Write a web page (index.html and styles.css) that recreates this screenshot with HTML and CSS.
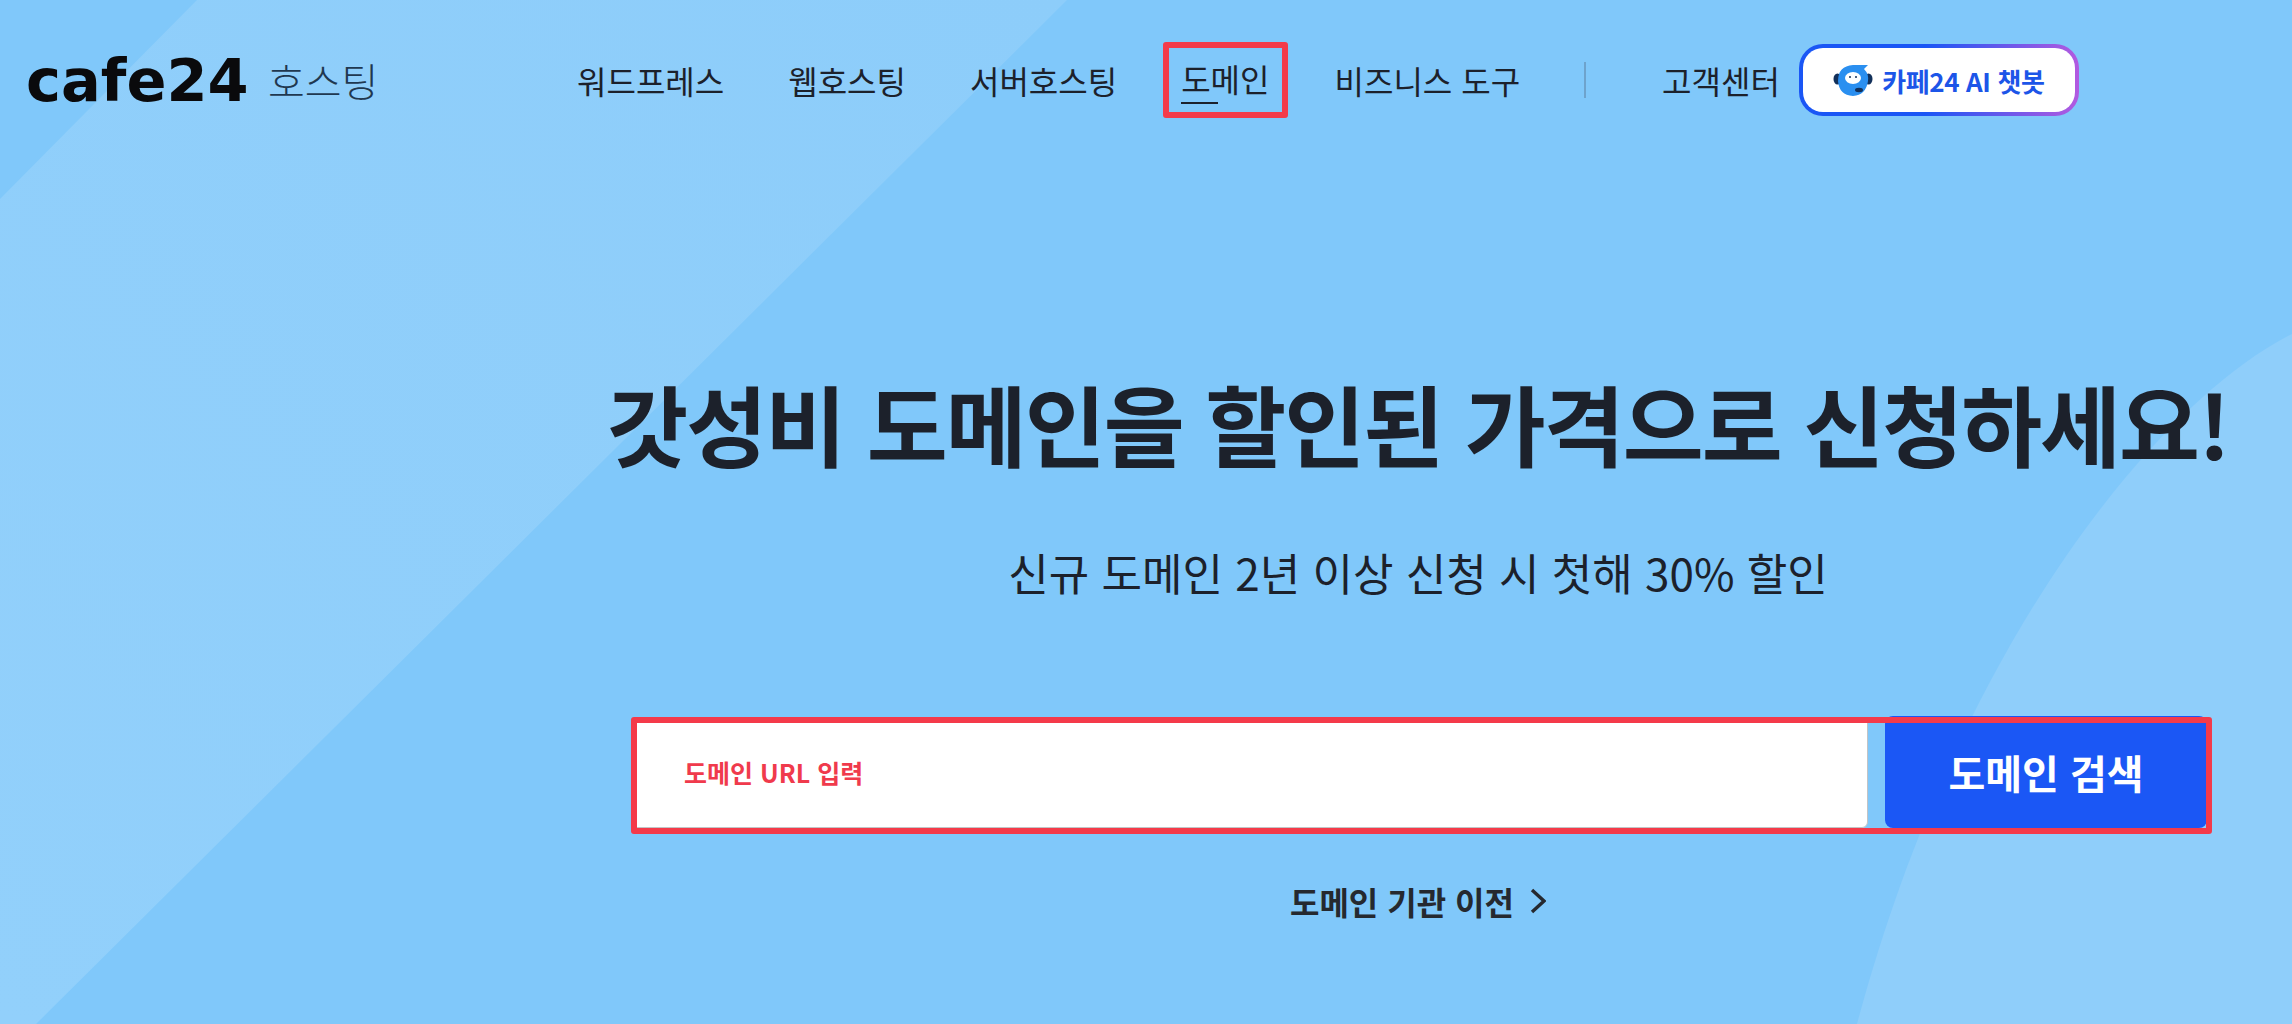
FILE: index.html
```html
<!DOCTYPE html>
<html lang="ko">
<head>
    <meta charset="UTF-8">
    <meta name="viewport" content="width=device-width, initial-scale=1.0">
    <title>카페24 호스팅 - 도메인</title>
    <link rel="stylesheet" href="styles.css">
</head>
<body>
    <!-- 배경 도형 -->
    <svg class="bg-shapes" viewBox="0 0 2292 1024" aria-hidden="true">
        <defs>
            <linearGradient id="bandFill" x1="1" y1="0" x2="0" y2="1">
                <stop offset="0" stop-color="#8dcdfa"/>
                <stop offset="1" stop-color="#92d0fb"/>
            </linearGradient>
        </defs>
        <polygon points="197,0 1067,0 36,1024 0,1024 0,199" fill="url(#bandFill)"/>
        <path d="M2292,334 C2160,400 1960,640 1857,1024 L2292,1024 Z" fill="#8fcefa"/>
    </svg>

    <header class="top-bar">
        <a class="logo" href="#">
            <span class="logo-mark">cafe24</span>
            <span class="logo-sub">호스팅</span>
        </a>
        <nav class="main-nav">
            <a href="#">워드프레스</a>
            <a href="#">웹호스팅</a>
            <a href="#">서버호스팅</a>
            <a href="#" class="is-active"><span>도메인</span></a>
            <a href="#">비즈니스 도구</a>
            <i class="nav-divider"></i>
            <a href="#" class="nav-help">고객센터</a>
            <a href="#" class="chatbot">
                <svg class="chatbot-icon" viewBox="0 0 40 32" aria-hidden="true">
                    <ellipse cx="4.5" cy="15" rx="4" ry="5.5" fill="#12305a"/>
                    <ellipse cx="35.5" cy="15" rx="4" ry="5.5" fill="#12305a"/>
                    <path d="M20 1 L35 1 L31 5 Q36 10 35 17 Q33 31 20 32 Q6 31 5 17 Q5 2 20 1 Z" fill="#2a8ff0"/>
                    <ellipse cx="20" cy="14" rx="8" ry="6" fill="#fff"/>
                    <circle cx="17" cy="13" r="1" fill="#12305a"/>
                    <circle cx="23" cy="13" r="1" fill="#12305a"/>
                    <ellipse cx="26" cy="26" rx="4" ry="2.2" fill="#12305a"/>
                </svg>
                카페24 AI 챗봇
            </a>
        </nav>
    </header>

    <main class="hero">
        <h1>갓성비 도메인을 할인된 가격으로 신청하세요!</h1>
        <p class="hero-sub">신규 도메인 2년 이상 신청 시 첫해 30% 할인</p>
        <form class="search-form">
            <div class="search-input">도메인 URL 입력</div>
            <button type="button" class="search-btn">도메인 검색</button>
        </form>
        <a href="#" class="transfer-link">
            도메인 기관 이전
            <svg viewBox="0 0 16 26" aria-hidden="true"><path d="M2 2 L14 13 L2 24" fill="none" stroke="#25292f" stroke-width="3.4"/></svg>
        </a>
    </main>
</body>
</html>
```

FILE: styles.css
```css
html, body {
    height: 100%;
}
body {
    margin: 0;
    height: 1024px;
    overflow: hidden;
    background-color: #80c8fa;
    color: #1c212b;
    font-family: "Noto Sans CJK KR", "Noto Sans", sans-serif;
}
a {
    color: inherit;
    text-decoration: none;
}
.bg-shapes {
    position: absolute;
    top: 0;
    left: 0;
    width: 2292px;
    height: 1024px;
}

/* 상단 메뉴 */
.top-bar {
    position: relative;
    display: flex;
    align-items: center;
    height: 78px;
    padding: 41px 0 0 26px;
}
.logo {
    display: flex;
    align-items: center;
    gap: 16px;
    width: 551px;
}
.logo-mark {
    width: 226px;
    font-family: "DejaVu Sans", sans-serif;
    font-size: 59px;
    font-weight: 700;
    line-height: 1;
    color: #0a0a0c;
}
.logo-sub {
    font-size: 40px;
    font-weight: 300;
    color: #1f3850;
}
.main-nav {
    display: flex;
    align-items: center;
    font-size: 32px;
    font-weight: 400;
}
.main-nav a {
    margin-right: 64px;
}
.main-nav .is-active {
    box-sizing: border-box;
    height: 76px;
    margin: 0 47px 0 -18px;
    padding: 0 12px;
    border: 6px solid #f43a4a;
    border-radius: 3px;
    line-height: 60px;
}
.is-active span {
    display: inline-block;
    height: 60px;
    background: linear-gradient(#1c212b, #1c212b) left 54px / 37px 2px no-repeat;
}
.nav-divider {
    width: 2px;
    height: 36px;
    margin-right: 76px;
    background-color: #6ea3cc;
}
.main-nav .nav-help {
    margin-right: 19px;
}
.main-nav .chatbot {
    display: flex;
    align-items: center;
    justify-content: center;
    gap: 9px;
    box-sizing: border-box;
    width: 280px;
    height: 72px;
    margin: 0;
    border: 4px solid transparent;
    border-radius: 24px;
    background:
        linear-gradient(#fff, #fff) padding-box,
        linear-gradient(90deg, #1a56f5 45%, #b25ae0) border-box;
    color: #1c55e8;
    font-size: 26px;
    font-weight: 700;
    letter-spacing: -0.4px;
}
.chatbot-icon {
    width: 40px;
    height: 32px;
}

/* 본문 */
.hero {
    position: relative;
    display: flex;
    flex-direction: column;
    align-items: center;
    width: 1616px;
    margin-left: 610px;
}
.hero h1 {
    margin: 259px 0 0;
    font-size: 88px;
    font-weight: 700;
    line-height: 1;
    letter-spacing: -2px;
    white-space: nowrap;
}
.hero-sub {
    margin: 80px 0 0;
    font-size: 44px;
    line-height: 1.2;
}
.search-form {
    position: relative;
    display: flex;
    align-self: flex-start;
    width: 1581px;
    height: 117px;
    margin: 118px 0 0 21px;
}
/* 빨간 강조 테두리 */
.search-form::after {
    content: "";
    position: absolute;
    inset: 0;
    border: 6px solid #f43a4a;
    border-radius: 3px;
    pointer-events: none;
}
.search-input {
    box-sizing: border-box;
    display: flex;
    align-items: center;
    width: 1237px;
    height: 111px;
    padding-left: 52px;
    background-color: #fff;
    border: 1px solid #c2c4c6;
    border-radius: 6px;
    color: #f03a4c;
    font-size: 25px;
    font-weight: 700;
}
.search-btn {
    width: 322px;
    height: 112px;
    margin: -1px 0 0 17px;
    padding: 0;
    border: 0;
    border-radius: 8px;
    background-color: #1b57f5;
    color: #fff;
    font-family: inherit;
    font-size: 40px;
    font-weight: 700;
}
.transfer-link {
    display: flex;
    align-items: center;
    gap: 16px;
    margin-top: 44px;
    color: #25292f;
    font-size: 32px;
    font-weight: 700;
}
.transfer-link svg {
    width: 16px;
    height: 26px;
}
```
